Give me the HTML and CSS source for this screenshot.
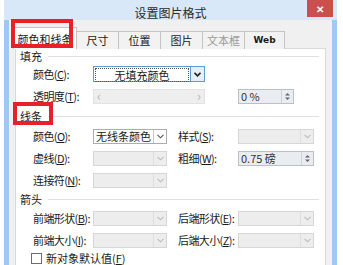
FILE: index.html
```html
<!DOCTYPE html>
<html lang="zh-CN">
<head>
    <meta charset="UTF-8">
    <title>设置图片格式</title>
    <link rel="stylesheet" href="styles.css">
</head>
<body>

    <div class="window">
        <div class="titlebar">
            设置图片格式
            <span class="close">&#x2715;</span>
        </div>

        <div class="dialog">
            <div class="tabs">
                <div class="tab active">颜色和线条</div>
                <div class="tab">尺寸</div>
                <div class="tab">位置</div>
                <div class="tab">图片</div>
                <div class="tab disabled">文本框</div>
                <div class="tab web">Web</div>
            </div>

            <div class="panel">
                <div class="section first"><span>填充</span><i></i></div>

                <div class="row">
                    <label>颜色(<u>C</u>):</label>
                    <div class="combo focus wide">
                        <div class="value"><span>无填充颜色</span></div>
                        <div class="arrow">
                            <svg width="7" height="5" viewBox="0 0 7 5"><path d="M0.5 0.8 L3.5 3.8 L6.5 0.8" fill="none" stroke="#222" stroke-width="1.6"/></svg>
                        </div>
                    </div>
                </div>

                <div class="row">
                    <label>透明度(<u>T</u>):</label>
                    <div class="slider">
                        <span>&lsaquo;</span><span>&rsaquo;</span>
                    </div>
                    <div class="spin short">
                        <div class="value">0 %</div>
                        <div class="arrows">
                            <svg width="5" height="9" viewBox="0 0 5 9"><path d="M0 3.5 L2.5 1 L5 3.5 Z M0 5.5 L2.5 8 L5 5.5 Z" fill="#666"/></svg>
                        </div>
                    </div>
                </div>

                <div class="section middle"><span>线条</span><i></i></div>

                <div class="row">
                    <label>颜色(<u>O</u>):</label>
                    <div class="combo">
                        <div class="value">无线条颜色</div>
                        <div class="arrow">
                            <svg width="7" height="5" viewBox="0 0 7 5"><path d="M0.5 0.8 L3.5 3.8 L6.5 0.8" fill="none" stroke="#555" stroke-width="1.1"/></svg>
                        </div>
                    </div>
                    <label>样式(<u>S</u>):</label>
                    <div class="combo off long">
                        <div class="value"></div>
                        <div class="arrow">
                            <svg width="7" height="5" viewBox="0 0 7 5"><path d="M0.5 0.8 L3.5 3.8 L6.5 0.8" fill="none" stroke="#bbb" stroke-width="1.1"/></svg>
                        </div>
                    </div>
                </div>

                <div class="row">
                    <label>虚线(<u>D</u>):</label>
                    <div class="combo off">
                        <div class="value"></div>
                        <div class="arrow">
                            <svg width="7" height="5" viewBox="0 0 7 5"><path d="M0.5 0.8 L3.5 3.8 L6.5 0.8" fill="none" stroke="#bbb" stroke-width="1.1"/></svg>
                        </div>
                    </div>
                    <label>粗细(<u>W</u>):</label>
                    <div class="spin long">
                        <div class="value">0.75 磅</div>
                        <div class="arrows">
                            <svg width="5" height="9" viewBox="0 0 5 9"><path d="M0 3.5 L2.5 1 L5 3.5 Z M0 5.5 L2.5 8 L5 5.5 Z" fill="#666"/></svg>
                        </div>
                    </div>
                </div>

                <div class="row">
                    <label>连接符(<u>N</u>):</label>
                    <div class="combo off">
                        <div class="value"></div>
                        <div class="arrow">
                            <svg width="7" height="5" viewBox="0 0 7 5"><path d="M0.5 0.8 L3.5 3.8 L6.5 0.8" fill="none" stroke="#bbb" stroke-width="1.1"/></svg>
                        </div>
                    </div>
                </div>

                <div class="section last"><span>箭头</span><i></i></div>

                <div class="row">
                    <label>前端形状(<u>B</u>):</label>
                    <div class="combo off">
                        <div class="value"></div>
                        <div class="arrow">
                            <svg width="7" height="5" viewBox="0 0 7 5"><path d="M0.5 0.8 L3.5 3.8 L6.5 0.8" fill="none" stroke="#bbb" stroke-width="1.1"/></svg>
                        </div>
                    </div>
                    <label>后端形状(<u>E</u>):</label>
                    <div class="combo off long">
                        <div class="value"></div>
                        <div class="arrow">
                            <svg width="7" height="5" viewBox="0 0 7 5"><path d="M0.5 0.8 L3.5 3.8 L6.5 0.8" fill="none" stroke="#bbb" stroke-width="1.1"/></svg>
                        </div>
                    </div>
                </div>

                <div class="row">
                    <label>前端大小(<u>I</u>):</label>
                    <div class="combo off">
                        <div class="value"></div>
                        <div class="arrow">
                            <svg width="7" height="5" viewBox="0 0 7 5"><path d="M0.5 0.8 L3.5 3.8 L6.5 0.8" fill="none" stroke="#bbb" stroke-width="1.1"/></svg>
                        </div>
                    </div>
                    <label>后端大小(<u>Z</u>):</label>
                    <div class="combo off long">
                        <div class="value"></div>
                        <div class="arrow">
                            <svg width="7" height="5" viewBox="0 0 7 5"><path d="M0.5 0.8 L3.5 3.8 L6.5 0.8" fill="none" stroke="#bbb" stroke-width="1.1"/></svg>
                        </div>
                    </div>
                </div>

                <div class="check">
                    <span class="box"></span>
                    新对象默认值(<u>F</u>)
                </div>
            </div>
        </div>

        <!-- red marks drawn on the screenshot -->
        <div class="mark mark-tab"></div>
        <div class="mark mark-line"></div>
    </div>

</body>
</html>
```

FILE: styles.css
```css
body {
    margin: 0;
    width: 343px;
    height: 265px;
    overflow: hidden;
    background: #ffffff;
    font-family: "Noto Sans CJK SC", "Liberation Sans", sans-serif;
    font-size: 11px;
    color: #1a1a1a;
}
u {
    text-decoration: underline;
    text-underline-offset: 1px;
}
.window {
    position: relative;
    margin-left: 4px;
    width: 333px;
    height: 265px;
    overflow: hidden;
    background: #9ecaf1;
}
.titlebar {
    position: relative;
    height: 20px;
    background: #d8e8f8;
    text-align: center;
    font-size: 12px;
    line-height: 16px;
    padding-top: 5px;
    box-sizing: border-box;
    color: #2b2b2b;
}
.close {
    position: absolute;
    right: 4px;
    top: 0;
    width: 26px;
    height: 17px;
    background: #c9504c;
    color: #fff;
    font-size: 10px;
    font-weight: bold;
    line-height: 17px;
    text-align: center;
}
.dialog {
    margin: 0 5px;
    height: 245px;
    box-sizing: border-box;
    background: #f0f0f0;
    padding: 7px 6px 0;
}
.tabs {
    display: flex;
    align-items: flex-end;
    height: 22px;
    position: relative;
    z-index: 1;
    margin-bottom: -1px;
}
.tab {
    width: 42px;
    height: 18px;
    box-sizing: border-box;
    border: 1px solid #c4c4c4;
    border-bottom: none;
    border-left: none;
    background: #f2f2f2;
    text-align: center;
    line-height: 17px;
}
.tab.active {
    width: 64px;
    height: 22px;
    margin-left: -2px;
    border-left: 1px solid #c4c4c4;
    background: #ffffff;
    line-height: 22px;
}
.tab.disabled {
    color: #9a9a9a;
}
.tab.web {
    width: 40px;
    font-family: "DejaVu Sans", sans-serif;
    font-size: 9px;
    font-weight: bold;
}
.panel {
    background: #ffffff;
    border: 1px solid #d9d9d9;
    height: 240px;
}
.section {
    display: flex;
    align-items: center;
    padding-left: 4px;
    margin-right: 6px;
}
.section i {
    flex: 1;
    height: 1px;
    background: #e0e0e0;
    margin-left: 6px;
}
.section.first {
    height: 14px;
}
.section.middle {
    height: 18px;
}
.section.last {
    height: 16px;
}
.row {
    display: grid;
    grid-template-columns: 60px 85px 60px 76px;
    align-items: center;
    height: 22px;
    padding-left: 17px;
}
.row label {
    white-space: nowrap;
    letter-spacing: -0.6px;
}
.combo {
    display: flex;
    width: 74px;
    height: 15px;
    box-sizing: border-box;
    border: 1px solid #acacac;
    background: #ffffff;
}
.combo .value {
    flex: 1;
    text-align: center;
    white-space: nowrap;
    line-height: 13px;
}
.combo .arrow {
    width: 12px;
    border-left: 1px solid #c8c8c8;
    display: flex;
    align-items: center;
    justify-content: center;
}
.combo.wide {
    width: 112px;
    height: 16px;
    grid-column: span 2;
    border-color: #5b9bd8;
}
.combo.focus .value {
    padding: 1px;
}
.combo.focus .value span {
    display: block;
    height: 12px;
    line-height: 12px;
    border: 1px dotted #555;
}
.combo.focus .arrow {
    width: 13px;
    background: #e3effa;
    border-left: 1px solid #5b9bd8;
}
.combo.off {
    background: #ededed;
    border-color: #d6d6d6;
}
.combo.off .arrow {
    border-left-color: #dedede;
}
.combo.long {
    width: 76px;
}
.slider {
    grid-column: span 2;
    width: 112px;
    height: 15px;
    box-sizing: border-box;
    background: #eeeeee;
    border: 1px solid #e2e2e2;
    display: flex;
    justify-content: space-between;
    padding: 0 3px;
    color: #b5b5b5;
    line-height: 12px;
    font-size: 13px;
}
.spin {
    display: flex;
    height: 15px;
    box-sizing: border-box;
    border: 1px solid #b8c0ca;
    background: #e9edf2;
}
.spin .value {
    flex: 1;
    padding-left: 2px;
    line-height: 13px;
    color: #333;
}
.spin .arrows {
    width: 11px;
    border-left: 1px solid #d0d4da;
    display: flex;
    align-items: center;
    justify-content: center;
}
.spin.short {
    width: 56px;
}
.spin.long {
    width: 76px;
}
.check {
    display: flex;
    align-items: center;
    padding-left: 15px;
    height: 14px;
}
.check .box {
    width: 11px;
    height: 11px;
    box-sizing: border-box;
    border: 1px solid #6d6d6d;
    background: #fff;
    margin-right: 4px;
}
.mark {
    position: absolute;
    border: 4px solid #e8202a;
    box-sizing: border-box;
    z-index: 2;
}
.mark-tab {
    left: 7px;
    top: 19px;
    width: 62px;
    height: 29px;
}
.mark-line {
    left: 9px;
    top: 102px;
    width: 40px;
    height: 23px;
}
```
